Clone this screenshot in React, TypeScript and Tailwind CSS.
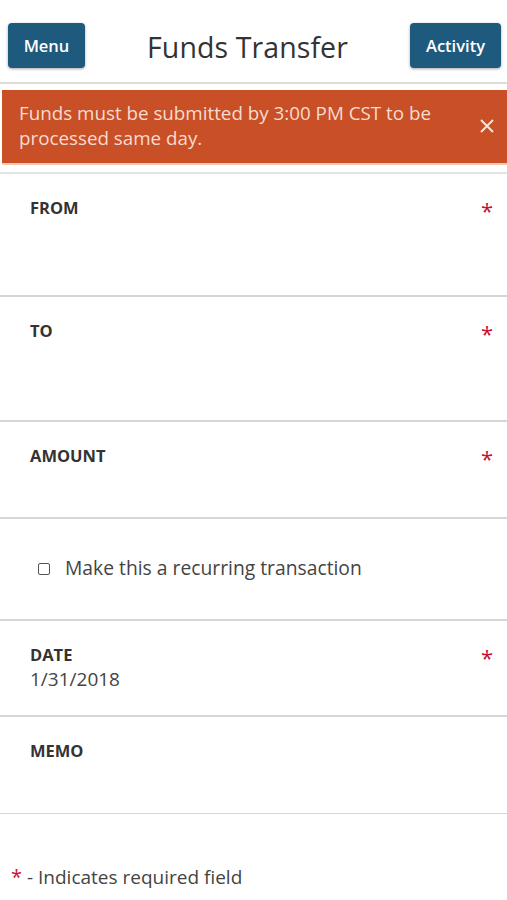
import React from "react";

function Star() {
  return <span className="text-[#c8102e] text-[22px] leading-none">*</span>;
}

function Field({ label, h, value }: { label: string; h: string; value?: string }) {
  return (
    <div className={`${h} border-b-2 border-[#d6d6d6] pl-[30px] pr-[14px] pt-[23px]`}>
      <div className="flex justify-between items-start">
        <div className="text-[16.5px] font-bold leading-[22px] text-[#333]">{label}</div>
        {label !== "MEMO" && <div className="mt-[2px]"><Star /></div>}
      </div>
      {value && <div className="text-[19px] leading-[26px] text-[#444] -mt-[6px]">{value}</div>}
    </div>
  );
}

export default function App() {
  return (
    <div className="w-[507px] min-h-[900px] bg-white" style={{ fontFamily: '"Open Sans", sans-serif' }}>
      <div className="flex items-center justify-between px-[8px] pt-[23px] pb-[13px] border-b-2 border-[#dcdcdc]">
        <button className="w-[77px] h-[45px] rounded-[4px] bg-[#1e5a7d] text-white text-[16.5px] font-semibold shadow-[0_1px_3px_rgba(0,0,0,0.35)]">Menu</button>
        <div className="text-[28.5px] text-[#333] font-normal tracking-[0.1px] mt-[3px]">Funds Transfer</div>
        <button className="w-[91px] h-[45px] rounded-[4px] bg-[#1e5a7d] text-white text-[16.5px] font-semibold shadow-[0_1px_3px_rgba(0,0,0,0.35)] mr-[-2px]">Activity</button>
      </div>
      <div className="mt-[6px] ml-[2px] h-[75px] bg-[#c94f27] flex items-center pl-[17px] pr-[10px] border-b-2 border-[#f0c8b4]">
        <div className="flex-1 text-[18.8px] leading-[25px] text-[#f7dccf]">Funds must be submitted by 3:00 PM CST to be processed same day.</div>
        <div className="w-[20px] flex justify-center">
          <svg width="14" height="14" viewBox="0 0 14 14"><path d="M1 1L13 13M13 1L1 13" stroke="#f7e4da" strokeWidth="2" /></svg>
        </div>
      </div>
      <div className="mt-[7px] border-t-2 border-[#e3e3e3]" />
      <Field label="FROM" h="h-[123px]" />
      <Field label="TO" h="h-[125px]" />
      <Field label="AMOUNT" h="h-[97px]" />
      <div className="h-[102px] border-b-2 border-[#d6d6d6] flex items-center pl-[38px]">
        <span className="w-[12px] h-[12px] border-[1.5px] border-[#555] rounded-[2px] mr-[15px]" />
        <span className="text-[19.3px] text-[#444]">Make this a recurring transaction</span>
      </div>
      <Field label="DATE" h="h-[96px]" value="1/31/2018" />
      <div className="h-[97px] border-b border-[#d6d6d6] pl-[30px] pt-[23px]">
        <div className="text-[16.5px] font-bold leading-[22px] text-[#333]">MEMO</div>
      </div>
      <div className="pl-[11px] pt-[48px] text-[19px] text-[#444]">
        <span className="text-[#c8102e] text-[20px]">*</span> - Indicates required field
      </div>
    </div>
  );
}
